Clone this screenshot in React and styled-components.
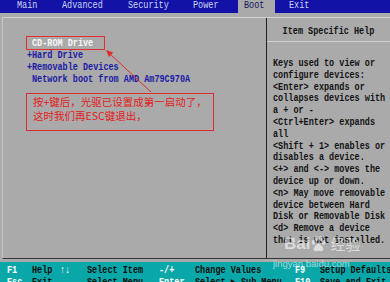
import React from 'react';
import styled, { createGlobalStyle } from 'styled-components';

const GlobalStyle = createGlobalStyle`
  html, body {
    margin: 0;
    padding: 0;
    background: #aaaaaa;
  }
  body {
    width: 390px;
    height: 282px;
    overflow: hidden;
  }
`;

const mono = `
  font-family: 'Liberation Mono', 'DejaVu Sans Mono', monospace;
  font-size: 8.5px;
  font-weight: bold;
  white-space: pre;
`;

const Screen = styled.div`
  position: relative;
  width: 390px;
  height: 282px;
  display: flex;
  flex-direction: column;
  overflow: hidden;
  background: #aaaaaa;
`;

// text of the BIOS bitmap font is tall and narrow
const Glyphs = styled.span`
  display: inline-block;
  transform: scaleY(1.25);
`;

const MenuBar = styled.div`
  flex: 0 0 13px;
  background: #1212a6;
  display: grid;
  grid-template-columns: 45px 66px 65px 45px 51px auto;
  padding-left: 17px;
`;

const MenuItem = styled.div`
  ${mono};
  font-weight: normal;
  height: 13px;
  line-height: 13px;
  justify-self: start;
  padding: ${p => (p.$active ? '0 11px 0 6px' : '0')};
  background: ${p => (p.$active ? '#aaaaaa' : 'transparent')};
  color: ${p => (p.$active ? '#14145c' : '#cbd6f2')};
`;

const Body = styled.div`
  flex: 0 0 249px;
  box-sizing: border-box;
  padding: 4px 0 3px 2px;
  display: flex;
`;

const Frame = styled.div`
  flex: 1;
  display: flex;
  border-top: 1px solid #d2d2d2;
  border-left: 1px solid #c6c6c6;
  border-bottom: 1px solid #363636;
`;

const BootPanel = styled.div`
  width: 264px;
  border-right: 1px solid #1e1e1e;
  padding: 19px 0 0 24px;
  box-sizing: border-box;
`;

const BootItem = styled.div`
  ${mono};
  display: flex;
  width: ${p => (p.$selected ? '77px' : 'fit-content')};
  height: 12px;
  line-height: 12px;
  color: ${p => (p.$selected ? '#f6f6f6' : '#1c1ca6')};
  outline: ${p => (p.$selected ? '1px solid #e03030' : 'none')};
`;

const Marker = styled.span`
  width: 5px;
  flex: 0 0 5px;
`;

const HelpPanel = styled.div`
  flex: 1;
  display: flex;
  flex-direction: column;
`;

const HelpHeader = styled.div`
  ${mono};
  height: 24px;
  padding-top: 1px;
  box-sizing: border-box;
  line-height: 24px;
  text-align: center;
  color: #141414;
  border-bottom: 1px solid #d0d0d0;
`;

const HelpBody = styled.div`
  ${mono};
  padding: 17px 0 0 6px;
  color: #141414;
`;

const HelpLine = styled.div`
  height: 11.8px;
  line-height: 11.8px;
`;

const KeyBar = styled.div`
  flex: 1;
  background: #0aa7a9;
  padding: 2px 0 0 7px;
  display: grid;
  grid-template-columns: 25px 28px 27px 72px 36px 100px 25px auto;
  grid-auto-rows: 12px;
`;

const KeyCell = styled.div`
  ${mono};
  line-height: 12px;
  color: ${p => (p.$key ? '#ffffff' : '#101010')};
`;

const Note = styled.div`
  position: absolute;
  left: 26px;
  top: 93px;
  width: 188px;
  height: 38px;
  box-sizing: border-box;
  border: 1px solid #e02c2c;
  padding: 1px 0 0 6px;
  font-family: 'Noto Sans CJK SC', 'Liberation Sans', sans-serif;
  font-size: 10.5px;
  line-height: 14px;
  color: #e42020;
  white-space: pre;
`;

const Pointer = styled.svg`
  position: absolute;
  left: 0;
  top: 0;
  pointer-events: none;
`;

const Watermark = styled.div`
  position: absolute;
  left: 284px;
  top: 234px;
  display: flex;
  align-items: center;
  gap: 1px;
  color: rgba(255, 255, 255, 0.6);
  pointer-events: none;
`;

const LogoWord = styled.span`
  font-family: 'Liberation Sans', Arial, sans-serif;
  font-weight: bold;
  font-size: 17px;
  line-height: 20px;
`;

const LogoCjk = styled.span`
  font-family: 'Noto Sans CJK SC', sans-serif;
  font-size: 15px;
  line-height: 20px;
  margin-left: 3px;
`;

const SiteMark = styled.div`
  position: absolute;
  left: 273px;
  top: 258px;
  font-family: 'Liberation Sans', Arial, sans-serif;
  font-size: 9.5px;
  color: rgba(255, 255, 255, 0.6);
  pointer-events: none;
`;

const menu = [
  { label: 'Main' },
  { label: 'Advanced' },
  { label: 'Security' },
  { label: 'Power' },
  { label: 'Boot', active: true },
  { label: 'Exit' },
];

const bootOrder = [
  { label: 'CD-ROM Drive', marker: '', selected: true },
  { label: 'Hard Drive', marker: '+' },
  { label: 'Removable Devices', marker: '+' },
  { label: 'Network boot from AMD Am79C970A', marker: '' },
];

const help = [
  'Keys used to view or',
  'configure devices:',
  '<Enter> expands or',
  'collapses devices with',
  'a + or -',
  '<Ctrl+Enter> expands',
  'all',
  '<Shift + 1> enables or',
  'disables a device.',
  '<+> and <-> moves the',
  'device up or down.',
  '<n> May move removable',
  'device between Hard',
  'Disk or Removable Disk',
  '<d> Remove a device',
  'that is not installed.',
];

const keys = [
  ['F1', 'Help', '↑↓', 'Select Item', '-/+', 'Change Values', 'F9', 'Setup Defaults'],
  ['Esc', 'Exit', '←→', 'Select Menu', 'Enter', 'Select ▶ Sub-Menu', 'F10', 'Save and Exit'],
];

const Paw = () => (
  <svg width="15" height="16" viewBox="0 0 15 16" fill="currentColor">
    <ellipse cx="2.6" cy="6.4" rx="1.9" ry="2.3" />
    <ellipse cx="5.6" cy="2.6" rx="1.9" ry="2.3" />
    <ellipse cx="9.6" cy="2.6" rx="1.9" ry="2.3" />
    <ellipse cx="12.6" cy="6.4" rx="1.9" ry="2.3" />
    <path d="M7.5 7.6c-2 0-3.2 2.4-4.4 4-1.1 1.5-0.6 3.6 1.6 3.6 1.3 0 1.8-0.5 2.8-0.5s1.5 0.5 2.8 0.5c2.2 0 2.7-2.1 1.6-3.6-1.2-1.6-2.4-4-4.4-4z" />
  </svg>
);

export default function App() {
  return (
    <>
      <GlobalStyle />
      <Screen>
        <MenuBar>
          {menu.map(m => (
            <MenuItem key={m.label} $active={m.active}>
              <Glyphs>{m.label}</Glyphs>
            </MenuItem>
          ))}
        </MenuBar>

        <Body>
          <Frame>
            <BootPanel>
              {bootOrder.map(item => (
                <BootItem key={item.label} $selected={item.selected}>
                  <Marker>
                    <Glyphs>{item.marker}</Glyphs>
                  </Marker>
                  <Glyphs>{item.label}</Glyphs>
                </BootItem>
              ))}
            </BootPanel>
            <HelpPanel>
              <HelpHeader>
                <Glyphs>Item Specific Help</Glyphs>
              </HelpHeader>
              <HelpBody>
                {help.map((line, i) => (
                  <HelpLine key={i}>
                    <Glyphs>{line}</Glyphs>
                  </HelpLine>
                ))}
              </HelpBody>
            </HelpPanel>
          </Frame>
        </Body>

        <KeyBar>
          {keys.map(row =>
            row.map((text, i) => (
              <KeyCell key={text + i} $key={i % 2 === 0}>
                <Glyphs>{text}</Glyphs>
              </KeyCell>
            ))
          )}
        </KeyBar>

        <Note>{'按+键后，光驱已设置成第一启动了，\n这时我们再ESC键退出，'}</Note>

        <Pointer width="390" height="282" viewBox="0 0 390 282">
          <line x1="151" y1="92" x2="110" y2="54" stroke="#e02c2c" strokeWidth="1" />
          <polygon points="106,50 113.2,52.6 109,57" fill="#e02c2c" />
        </Pointer>

        <Watermark>
          <LogoWord>Bai</LogoWord>
          <Paw />
          <LogoCjk>经验</LogoCjk>
        </Watermark>
        <SiteMark>jingyan.baidu.com</SiteMark>
      </Screen>
    </>
  );
}
